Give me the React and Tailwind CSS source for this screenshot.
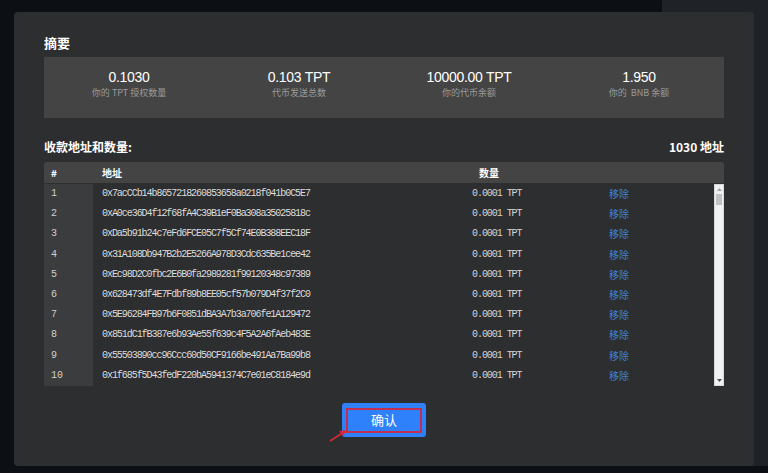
import React from 'react'

const summary = [
  { value: '0.1030', label: '你的 TPT 授权数量' },
  { value: '0.103 TPT', label: '代币发送总数' },
  { value: '10000.00 TPT', label: '你的代币余额' },
  { value: '1.950', label: '你的  BNB 余额' },
]

const addresses = [
  '0x7acCCb14b8657218260853658a0218f041b0C5E7',
  '0xA0ce36D4f12f68fA4C39B1eF0Ba308a35025818c',
  '0xDa5b91b24c7eFd6FCE05C7f5Cf74E0B388EEC18F',
  '0x31A108Db947B2b2E5266A978D3Cdc635Be1cee42',
  '0xEc98D2C0fbc2E6B0fa2989281f99120348c97389',
  '0x628473df4E7Fdbf89b8EE05cf57b079D4f37f2C0',
  '0x5E96284FB97b6F0851dBA3A7b3a706fe1A129472',
  '0x851dC1fB387e6b93Ae55f639c4F5A2A6fAeb483E',
  '0x55503890cc96Ccc60d50CF9166be491Aa7Ba99b8',
  '0x1f685f5D43fedF220bA5941374C7e01eC8184e9d',
]

const mono = { fontFamily: '"Liberation Mono", "Noto Sans CJK SC", monospace' }

const Row = ({ index, address }) => (
  <div className="flex h-[20.2px] items-center text-[10px] leading-[10px]">
    <div className="flex h-full w-[49px] items-center bg-[#3b3c3e] pl-[7px] text-[#d0d0d0]" style={mono}>
      {index}
    </div>
    <div className="w-[370px] pl-[9px] tracking-[-1.05px] text-[#dcdcdc]" style={mono}>
      {address}
    </div>
    <div className="w-[140px] pl-[9px] tracking-[-1.05px] text-[#d4d4d4]" style={mono}>
      0.0001 TPT
    </div>
    <div className="pl-[6px] text-[10px] leading-[10px] text-[#3f82d6] font-['Noto_Sans_CJK_SC',sans-serif]">移除</div>
  </div>
)

const Scrollbar = () => (
  <div className="flex w-[10px] flex-col border border-[#d8d8d8] bg-[#f1f1f1]">
    <div className="flex h-[9px] items-center justify-center">
      <svg width="5" height="3" viewBox="0 0 5 3"><path d="M0 3 L2.5 0 L5 3 Z" fill="#a3a3a3" /></svg>
    </div>
    <div className="mx-[1px] h-[11px] bg-[#c1c1c1]" />
    <div className="flex-1" />
    <div className="flex h-[9px] items-center justify-center">
      <svg width="5" height="3" viewBox="0 0 5 3"><path d="M0 0 L2.5 3 L5 0 Z" fill="#505050" /></svg>
    </div>
  </div>
)

export default function App() {
  return (
    <div className="relative h-[473px] w-[768px] overflow-hidden bg-[#0c0f14] font-['Liberation_Sans','Noto_Sans_CJK_SC',sans-serif]">
      {/* page behind the dialog */}
      <div className="absolute right-0 top-0 h-[466px] w-[106px] bg-[#1f2227]" />

      <div className="absolute left-[14px] top-[12px] flex h-[454px] w-[740px] flex-col rounded-[4px] bg-[#2d2e30] px-[30px] pt-[23px]">
        <h2 className="text-[13px] font-bold leading-[16px] text-white font-['Noto_Sans_CJK_SC',sans-serif]">摘要</h2>

        <div className="mt-[6px] grid h-[61px] grid-cols-4 bg-[#444444] pt-[11px]">
          {summary.map((s) => (
            <div key={s.label} className="flex flex-col items-center">
              <div className="text-[14px] leading-[18px] tracking-[-0.3px] text-white">{s.value}</div>
              <div className="mt-[1px] whitespace-pre text-[9px] leading-[12px] text-[#9a9a9a] font-['Noto_Sans_CJK_SC',sans-serif]">
                {s.label}
              </div>
            </div>
          ))}
        </div>

        <div className="mt-[21px] flex items-center justify-between text-[12px] font-bold leading-[16px] text-white font-['Noto_Sans_CJK_SC',sans-serif]">
          <span>收款地址和数量:</span>
          <span>1030 地址</span>
        </div>

        <div className="mt-[7px] flex h-[21px] items-center rounded-t-[3px] bg-[#444444] text-[10px] font-bold text-white font-['Noto_Sans_CJK_SC',sans-serif]">
          <div className="w-[49px] pl-[7px]">#</div>
          <div className="w-[370px] pl-[9px]">地址</div>
          <div className="w-[140px] pl-[16px]">数量</div>
        </div>

        <div className="mt-[1px] flex h-[202px]">
          <div className="flex-1 overflow-hidden">
            {addresses.map((a, i) => (
              <Row key={a} index={i + 1} address={a} />
            ))}
          </div>
          <Scrollbar />
        </div>

        <div className="mt-[17px] flex justify-center">
          <button className="relative h-[34px] w-[84px] rounded-[3px] bg-[#2e80fb] text-[13px] text-white font-['Noto_Sans_CJK_SC',sans-serif]">
            确认
            <span className="absolute left-[4px] top-[5px] h-[25px] w-[76px] border-2 border-[#c2304f]" />
            <svg className="absolute left-[-14px] top-[24px]" width="22" height="16" viewBox="0 0 22 16">
              <path d="M2 14 L16 5" stroke="#d8283a" strokeWidth="1.6" fill="none" />
              <path d="M19 3 L11 4 L15 9 Z" fill="#d8283a" />
            </svg>
          </button>
        </div>
      </div>
    </div>
  )
}
